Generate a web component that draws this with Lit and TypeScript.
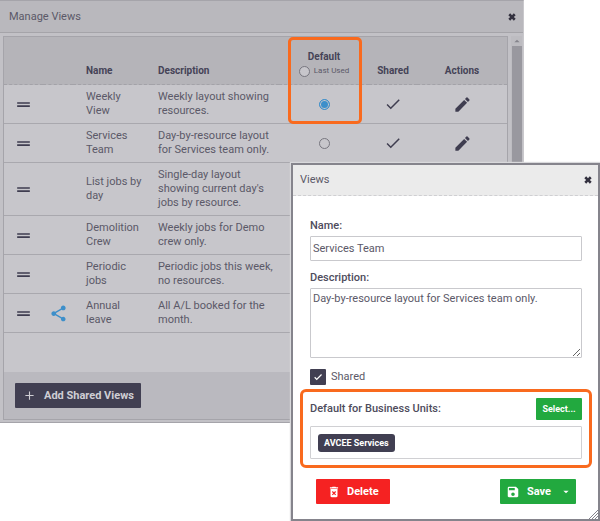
import { LitElement, html, css, svg, nothing } from "lit";
import { customElement, property } from "lit/decorators.js";

interface ViewRow {
  name: string;
  description: string;
  isDefault: boolean;
  sharedIcon: boolean;
}

const rows: ViewRow[] = [
  { name: "Weekly View", description: "Weekly layout showing resources.", isDefault: true, sharedIcon: false },
  { name: "Services Team", description: "Day-by-resource layout for Services team only.", isDefault: false, sharedIcon: false },
  { name: "List jobs by day", description: "Single-day layout showing current day's jobs by resource.", isDefault: false, sharedIcon: false },
  { name: "Demolition Crew", description: "Weekly jobs for Demo crew only.", isDefault: false, sharedIcon: false },
  { name: "Periodic jobs", description: "Periodic jobs this week, no resources.", isDefault: false, sharedIcon: false },
  { name: "Annual leave", description: "All A/L booked for the month.", isDefault: false, sharedIcon: true },
];

const shapes: Record<string, unknown> = {
  grip: svg`<path d="M20 9H4v2h16zM4 15h16v-2H4z"/>`,
  share: svg`<path d="M18 16.08c-.76 0-1.44.3-1.96.77L8.91 12.7c.05-.23.09-.46.09-.7s-.04-.47-.09-.7l7.05-4.11c.54.5 1.25.81 2.04.81 1.66 0 3-1.34 3-3s-1.34-3-3-3-3 1.34-3 3c0 .24.04.47.09.7L8.04 9.81C7.5 9.31 6.79 9 6 9c-1.66 0-3 1.34-3 3s1.34 3 3 3c.79 0 1.5-.31 2.04-.81l7.12 4.16c-.05.21-.08.43-.08.65 0 1.61 1.31 2.92 2.92 2.92s2.92-1.31 2.92-2.92-1.31-2.92-2.92-2.92z"/>`,
  check: svg`<path d="M9 16.17 4.83 12l-1.42 1.41L9 19 21 7l-1.41-1.41z"/>`,
  tick: svg`<path d="M9 15.5 5 11.5l-2 2L9 19.5 21.5 7l-2-2z"/>`,
  pencil: svg`<path d="M3 17.25V21h3.75L17.81 9.94l-3.75-3.75zM20.71 7.04a1 1 0 0 0 0-1.41l-2.34-2.34a1 1 0 0 0-1.41 0l-1.83 1.83 3.75 3.75z"/>`,
  close: svg`<path d="M6.5 1 12 6.5 17.5 1 23 6.5 17.5 12 23 17.5 17.5 23 12 17.5 6.5 23 1 17.5 6.5 12 1 6.5z"/>`,
  plus: svg`<path d="M13.2 3v7.8H21v2.4h-7.8V21h-2.4v-7.8H3v-2.4h7.8V3z"/>`,
  bin: svg`<path d="M6 19c0 1.1.9 2 2 2h8c1.1 0 2-.9 2-2V7H6zm2.46-7.12 1.41-1.41L12 12.59l2.12-2.12 1.41 1.41L13.41 14l2.12 2.12-1.41 1.41L12 15.41l-2.12 2.12-1.41-1.41L10.59 14zM15.5 4l-1-1h-5l-1 1H5v2h14V4z"/>`,
  disk: svg`<path d="M17 3H5a2 2 0 0 0-2 2v14c0 1.1.89 2 2 2h14c1.1 0 2-.9 2-2V7zm-5 16c-1.66 0-3-1.34-3-3s1.34-3 3-3 3 1.34 3 3-1.34 3-3 3zm3-10H5V5h10z"/>`,
  caret: svg`<path d="M4 8h16l-8 8z"/>`,
};

@customElement("ui-icon")
class UiIcon extends LitElement {
  @property() name = "";
  static styles = css`
    :host { display: inline-flex; width: 19px; height: 19px; flex: none; }
    svg { width: 100%; height: 100%; fill: currentColor; display: block; }
  `;
  render() {
    return html`<svg viewBox="0 0 24 24" aria-hidden="true">${shapes[this.name]}</svg>`;
  }
}

const shared = css`
  :host, *, *::before, *::after { box-sizing: border-box; }
  button { font: inherit; color: inherit; border: 0; background: none; padding: 0; margin: 0; }
  input, textarea { font: inherit; color: inherit; margin: 0; }
  h2 { margin: 0; font-size: 11px; font-weight: 400; }
  .close { display: flex; padding: 2px; color: #33313f; }
  .close ui-icon { width: 8px; height: 8px; }
`;

@customElement("manage-views")
class ManageViews extends LitElement {
  static styles = [
    shared,
    css`
      :host { display: block; color: #5b5968; background: #c2c1c6; border: 1px solid #a5a4aa; border-left: 0; border-right-color: #c9c8cc; }
      header {
        display: flex; justify-content: space-between; align-items: center;
        height: 32px; padding: 0 5px 0 9px; background: #b9b8bd; border-bottom: 1px solid #a5a4a9;
      }
      .body { display: flex; gap: 3px; padding: 3px 1px 2px 3px; }
      .panel { flex: 1; min-width: 0; border: 1px solid #a5a4aa; background: #c7c6cb; }
      table { width: 100%; table-layout: fixed; border-collapse: separate; border-spacing: 0; }
      th, td { padding: 5px 2px 5px 6px; border-bottom: 1px solid #a9a8ae; text-align: left; line-height: 14px; font-weight: 400; }
      thead th {
        height: 48px; padding: 5px 6px 6px; vertical-align: bottom; background: #b5b4b9;
        border-bottom: 1px dashed #a3a2a8; font-size: 10px; font-weight: 700; color: #454357;
      }
      .c-grip { width: 39px; }
      .c-share { width: 30px; }
      .c-name { width: 79px; }
      .c-default { width: 90px; }
      .c-shared { width: 48px; }
      .c-actions { width: 90px; }
      th.name, td.name { padding-left: 13px; padding-right: 8px; }
      th.mid, td.mid { text-align: center; padding-left: 0; padding-right: 0; }
      td ui-icon { display: flex; margin: 0 auto; color: #3f3d50; }
      td .check { width: 18px; height: 18px; }
      td .share { color: #3d8fca; }
      .edit { display: block; margin: 0 auto; }
      th.default { position: relative; }
      .ring {
        position: absolute; left: 9px; top: 0; width: 74px; height: 87px;
        border: 3px solid #f96a1e; border-radius: 5px; pointer-events: none;
      }
      .last { display: flex; align-items: center; justify-content: center; gap: 4px; font-size: 8px; font-weight: 400; color: #5b5968; }
      input[type="radio"] {
        appearance: none; display: block; flex: none; width: 11px; height: 11px; margin: 0 auto;
        border: 1px solid #77767f; border-radius: 50%;
      }
      .last input[type="radio"] { margin: 0; background: #c7c6cb; }
      input[type="radio"]:checked { border-color: #3d8fca; background: #3d8fca; box-shadow: inset 0 0 0 1px #c7c6cb; }
      footer { margin-top: 39px; padding: 11px; height: 47px; background: #bab9bf; }
      .add {
        display: flex; align-items: center; gap: 9px; height: 25px; padding: 0 7px 0 9px;
        background: #413f52; color: #cfced4; font-weight: 700; border-radius: 1px;
      }
      .add ui-icon { width: 11px; height: 11px; }
      .scroll { width: 11px; background: #bdbcc1; display: flex; flex-direction: column; align-items: center; }
      .scroll ui-icon { width: 8px; height: 10px; color: #85848c; transform: rotate(180deg); }
      .thumb { flex: 1; width: 10px; background: #99989f; }
    `,
  ];

  render() {
    return html`
      <header>
        <h2>Manage Views</h2>
        <button class="close" aria-label="Close"><ui-icon name="close"></ui-icon></button>
      </header>
      <div class="body">
        <div class="panel">
          <table>
            <colgroup>
              <col class="c-grip" /><col class="c-share" /><col class="c-name" /><col />
              <col class="c-default" /><col class="c-shared" /><col class="c-actions" />
            </colgroup>
            <thead>
              <tr>
                <th></th>
                <th></th>
                <th class="name">Name</th>
                <th>Description</th>
                <th class="mid default">
                  Default
                  <label class="last"><input type="radio" name="default" />Last Used</label>
                  <span class="ring"></span>
                </th>
                <th class="mid">Shared</th>
                <th class="mid">Actions</th>
              </tr>
            </thead>
            <tbody>
              ${rows.map(
                (r) => html`<tr>
                  <td class="mid"><ui-icon name="grip"></ui-icon></td>
                  <td class="mid">${r.sharedIcon ? html`<ui-icon class="share" name="share"></ui-icon>` : nothing}</td>
                  <td class="name">${r.name}</td>
                  <td>${r.description}</td>
                  <td class="mid"><input type="radio" name="default" aria-label=${r.name} ?checked=${r.isDefault} /></td>
                  <td class="mid"><ui-icon class="check" name="check"></ui-icon></td>
                  <td class="mid"><button class="edit" aria-label="Edit"><ui-icon name="pencil"></ui-icon></button></td>
                </tr>`
              )}
            </tbody>
          </table>
          <footer>
            <button class="add"><ui-icon name="plus"></ui-icon>Add Shared Views</button>
          </footer>
        </div>
        <div class="scroll"><ui-icon name="caret"></ui-icon><div class="thumb"></div></div>
      </div>
    `;
  }
}

@customElement("view-editor")
class ViewEditor extends LitElement {
  static styles = [
    shared,
    css`
      :host { display: block; color: #5b5968; background: #fff; border: 2px solid #85848c; }
      header {
        display: flex; justify-content: space-between; align-items: center;
        height: 31px; padding: 0 4px 0 7px; background: #ebebeb; border-bottom: 1px dashed #cfcfd2;
      }
      form { position: relative; padding: 22px 16px 15px 17px; }
      .label { display: block; line-height: 16px; margin-bottom: 2px; font-weight: 500; color: #4e4c5c; }
      .text { display: block; width: 100%; padding: 0 2px; border: 1px solid #c9c9cd; border-radius: 1px; outline: 0; background: #fff; }
      input.text { height: 25px; margin-bottom: 9px; }
      textarea.text { height: 70px; padding: 3px 2px; line-height: 14px; resize: vertical; }
      .shared { display: flex; align-items: center; gap: 5px; height: 16px; margin: 11px 0 4px; }
      .tick { position: relative; display: flex; width: 16px; height: 16px; }
      .tick input { appearance: none; width: 16px; height: 16px; background: #413f52; border-radius: 1px; }
      .tick ui-icon { position: absolute; inset: 3px; width: 10px; height: 10px; color: #fff; pointer-events: none; }
      .units { margin: 0 -10px; padding: 6px 7px; border: 3px solid #f96a1e; border-radius: 6px; }
      .line { display: flex; justify-content: space-between; align-items: center; height: 22px; margin-bottom: 6px; }
      .line .label { margin: 0; }
      .green { background: #22a93f; color: #fff; font-weight: 700; }
      .select { height: 22px; width: 46px; font-size: 9px; border-radius: 1px; }
      .chips { display: flex; align-items: center; height: 33px; padding: 0 7px; border: 1px solid #d0d0d3; border-radius: 1px; }
      .chip { line-height: 18px; padding: 0 6px; border-radius: 3px; background: #413f52; color: #fff; font-size: 9px; font-weight: 700; }
      .actions { display: flex; justify-content: space-between; margin-top: 11px; padding: 0 6px; }
      .actions button { display: flex; align-items: center; height: 25px; font-weight: 700; }
      .delete { gap: 6px; padding: 0 11px; background: #f52222; color: #fff; border-radius: 1px; }
      .split { display: flex; border-radius: 1px; }
      .save { gap: 7px; padding: 0 5px 0 6px; }
      .more { padding: 0 6px; }
      .actions ui-icon { width: 14px; height: 14px; }
      .actions .more ui-icon { width: 8px; height: 8px; }
      .corner { position: absolute; right: 0; bottom: 0; width: 10px; height: 10px; stroke: #85848c; fill: none; }
    `,
  ];

  render() {
    return html`
      <header>
        <h2>Views</h2>
        <button class="close" aria-label="Close"><ui-icon name="close"></ui-icon></button>
      </header>
      <form @submit=${(e: Event) => e.preventDefault()}>
        <label class="label" for="name">Name:</label>
        <input class="text" id="name" type="text" value="Services Team" />
        <label class="label" for="description">Description:</label>
        <textarea class="text" id="description" .value=${"Day-by-resource layout for Services team only."}></textarea>
        <label class="shared">
          <span class="tick"><input type="checkbox" checked /><ui-icon name="tick"></ui-icon></span>Shared
        </label>
        <div class="units">
          <div class="line">
            <span class="label">Default for Business Units:</span>
            <button class="green select" type="button">Select...</button>
          </div>
          <div class="chips"><span class="chip">AVCEE Services</span></div>
        </div>
        <div class="actions">
          <button class="delete" type="button"><ui-icon name="bin"></ui-icon>Delete</button>
          <div class="split green">
            <button class="save" type="submit"><ui-icon name="disk"></ui-icon>Save</button>
            <button class="more" type="button" aria-label="More save options"><ui-icon name="caret"></ui-icon></button>
          </div>
        </div>
        <svg class="corner" viewBox="0 0 10 10" aria-hidden="true"><path d="M1 10 10 1M4 10l6-6M7 10l3-3" /></svg>
      </form>
    `;
  }
}

@customElement("app-root")
class AppRoot extends LitElement {
  static styles = css`
    :host {
      display: block; position: relative; min-height: 100vh; background: #fff;
      font: 11px/14px Roboto, "Liberation Sans", sans-serif;
    }
    manage-views { margin-right: 76px; }
    view-editor { position: absolute; right: 0; top: 163px; width: 309px; box-shadow: 0 0 1px 1px #d9d9dc; }
  `;
  render() {
    return html`<manage-views></manage-views><view-editor></view-editor>`;
  }
}
